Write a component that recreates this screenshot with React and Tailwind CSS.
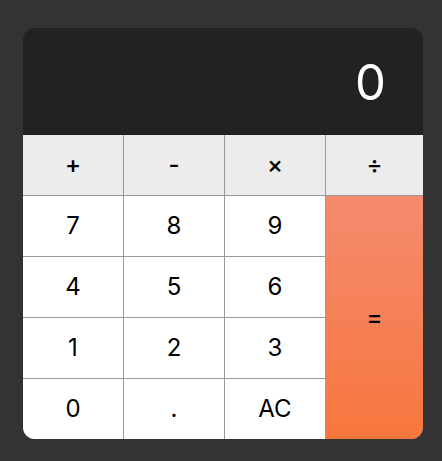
const ops = ['+', '-', '×', '÷'];
const keys = ['7', '8', '9', '4', '5', '6', '1', '2', '3', '0', '.', 'AC'];

export default function App() {
  return (
    <div
      className="min-h-screen bg-[#333333] pt-[28px] pl-[23px]"
      style={{ fontFamily: 'Inter, "Noto Sans", sans-serif' }}
    >
      <div className="w-[400px] rounded-xl overflow-hidden">
        <div className="h-[107px] bg-[#222222] flex items-center justify-end pr-[37px] pt-[1px]">
          <span className="text-white text-[49px] leading-none">0</span>
        </div>
        <div className="grid grid-cols-[100px_100px_100px_97px] grid-rows-[60px_60px_60px_60px_60px] gap-px bg-[#999999]">
          {ops.map((op) => (
            <button key={op} className="bg-[#ececec] text-black text-2xl font-medium flex items-center justify-center">
              {op}
            </button>
          ))}
          {keys.slice(0, 3).map((k) => (
            <button key={k} className="bg-white text-black text-2xl flex items-center justify-center">
              {k}
            </button>
          ))}
          <button className="row-span-4 bg-gradient-to-b from-[#f58b6e] to-[#f7763c] text-black text-2xl font-medium flex items-center justify-center">
            =
          </button>
          {keys.slice(3).map((k) => (
            <button key={k} className="bg-white text-black text-2xl flex items-center justify-center">
              {k}
            </button>
          ))}
        </div>
      </div>
    </div>
  );
}
